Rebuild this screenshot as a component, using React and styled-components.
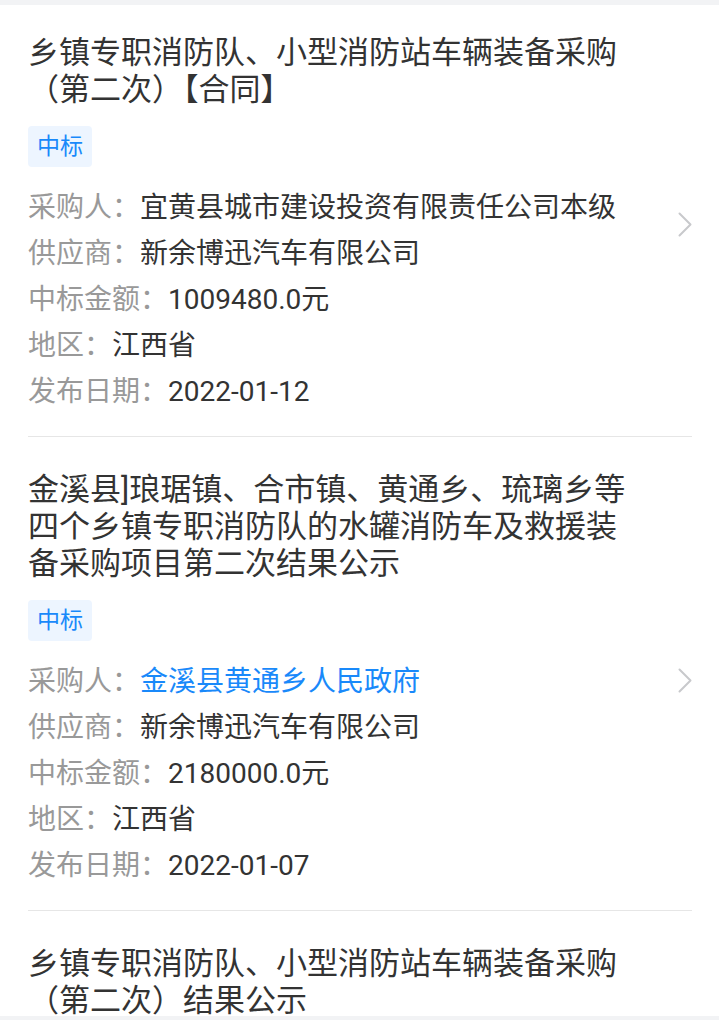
import React from "react";
import styled, { createGlobalStyle } from "styled-components";

const items = [
  {
    id: 1,
    title: "乡镇专职消防队、小型消防站车辆装备采购（第二次）【合同】",
    tag: "中标",
    buyer: "宜黄县城市建设投资有限责任公司本级",
    buyerLink: false,
    supplier: "新余博迅汽车有限公司",
    amount: "1009480.0元",
    region: "江西省",
    date: "2022-01-12",
  },
  {
    id: 2,
    title:
      "金溪县]琅琚镇、合市镇、黄通乡、琉璃乡等四个乡镇专职消防队的水罐消防车及救援装备采购项目第二次结果公示",
    tag: "中标",
    buyer: "金溪县黄通乡人民政府",
    buyerLink: true,
    supplier: "新余博迅汽车有限公司",
    amount: "2180000.0元",
    region: "江西省",
    date: "2022-01-07",
  },
  {
    id: 3,
    title: "乡镇专职消防队、小型消防站车辆装备采购（第二次）结果公示",
    tag: "中标",
    buyer: "宜黄县城市建设投资有限责任公司本级",
    buyerLink: false,
    supplier: "新余博迅汽车有限公司",
    amount: "1009480.0元",
    region: "江西省",
    date: "2022-01-05",
  },
];

const Chevron = () => (
  <svg width="14" height="25" viewBox="0 0 14 25" fill="none">
    <polyline
      points="1.5,1.5 12.5,12.5 1.5,23.5"
      stroke="#c8c9cc"
      strokeWidth="2"
      strokeLinecap="round"
      strokeLinejoin="round"
    />
  </svg>
);

const ResultItem = ({ data }) => (
  <Item>
    <Content>
      <Title>{data.title}</Title>
      <Tag>{data.tag}</Tag>
      <Fields>
        <Field>
          <Label>采购人：</Label>
          <Value $link={data.buyerLink}>{data.buyer}</Value>
        </Field>
        <Field>
          <Label>供应商：</Label>
          <Value>{data.supplier}</Value>
        </Field>
        <Field>
          <Label>中标金额：</Label>
          <Value>{data.amount}</Value>
        </Field>
        <Field>
          <Label>地区：</Label>
          <Value>{data.region}</Value>
        </Field>
        <Field>
          <Label>发布日期：</Label>
          <Value>{data.date}</Value>
        </Field>
      </Fields>
    </Content>
    <Arrow>
      <Chevron />
    </Arrow>
  </Item>
);

const App = () => (
  <>
    <GlobalStyle />
    <TopStrip />
    <List>
      {items.map((item) => (
        <ResultItem key={item.id} data={item} />
      ))}
    </List>
    <BottomStrip />
  </>
);

export default App;

const GlobalStyle = createGlobalStyle`
  body {
    margin: 0;
    background: #ffffff;
    font-family: "Roboto", "Noto Sans CJK SC", sans-serif;
    color: #333333;
  }
`;

const TopStrip = styled.div`
  position: fixed;
  top: 0;
  left: 0;
  right: 0;
  height: 5px;
  background: #f2f3f5;
  z-index: 2;
`;

const BottomStrip = styled.div`
  position: fixed;
  bottom: 0;
  left: 0;
  right: 0;
  height: 4px;
  background: #f2f3f5;
  z-index: 2;
`;

const List = styled.div`
  display: flex;
  flex-direction: column;
  background: #ffffff;
`;

const Item = styled.div`
  display: flex;
  align-items: center;
  margin: 0 27px 0 28px;
  padding: 34px 0 21px;
  border-bottom: 1px solid #e6e6e6;
`;

const Content = styled.div`
  flex: 1;
  min-width: 0;
  display: flex;
  flex-direction: column;
  align-items: flex-start;
  margin-right: 40px;
`;

const Title = styled.div`
  font-size: 31px;
  line-height: 37px;
  color: #333333;
`;

const Tag = styled.span`
  margin-top: 18px;
  height: 41px;
  padding: 0 9px;
  line-height: 41px;
  font-size: 23px;
  color: #1989fa;
  background: #edf5ff;
  border-radius: 4px;
`;

const Fields = styled.div`
  margin-top: 18px;
  display: flex;
  flex-direction: column;
`;

const Field = styled.div`
  display: flex;
  font-size: 28px;
  line-height: 46px;
  white-space: nowrap;
`;

const Label = styled.span`
  color: #999999;
`;

const Value = styled.span`
  color: ${(p) => (p.$link ? "#1989fa" : "#333333")};
`;

const Arrow = styled.div`
  flex: none;
  display: flex;
  align-items: center;
`;
